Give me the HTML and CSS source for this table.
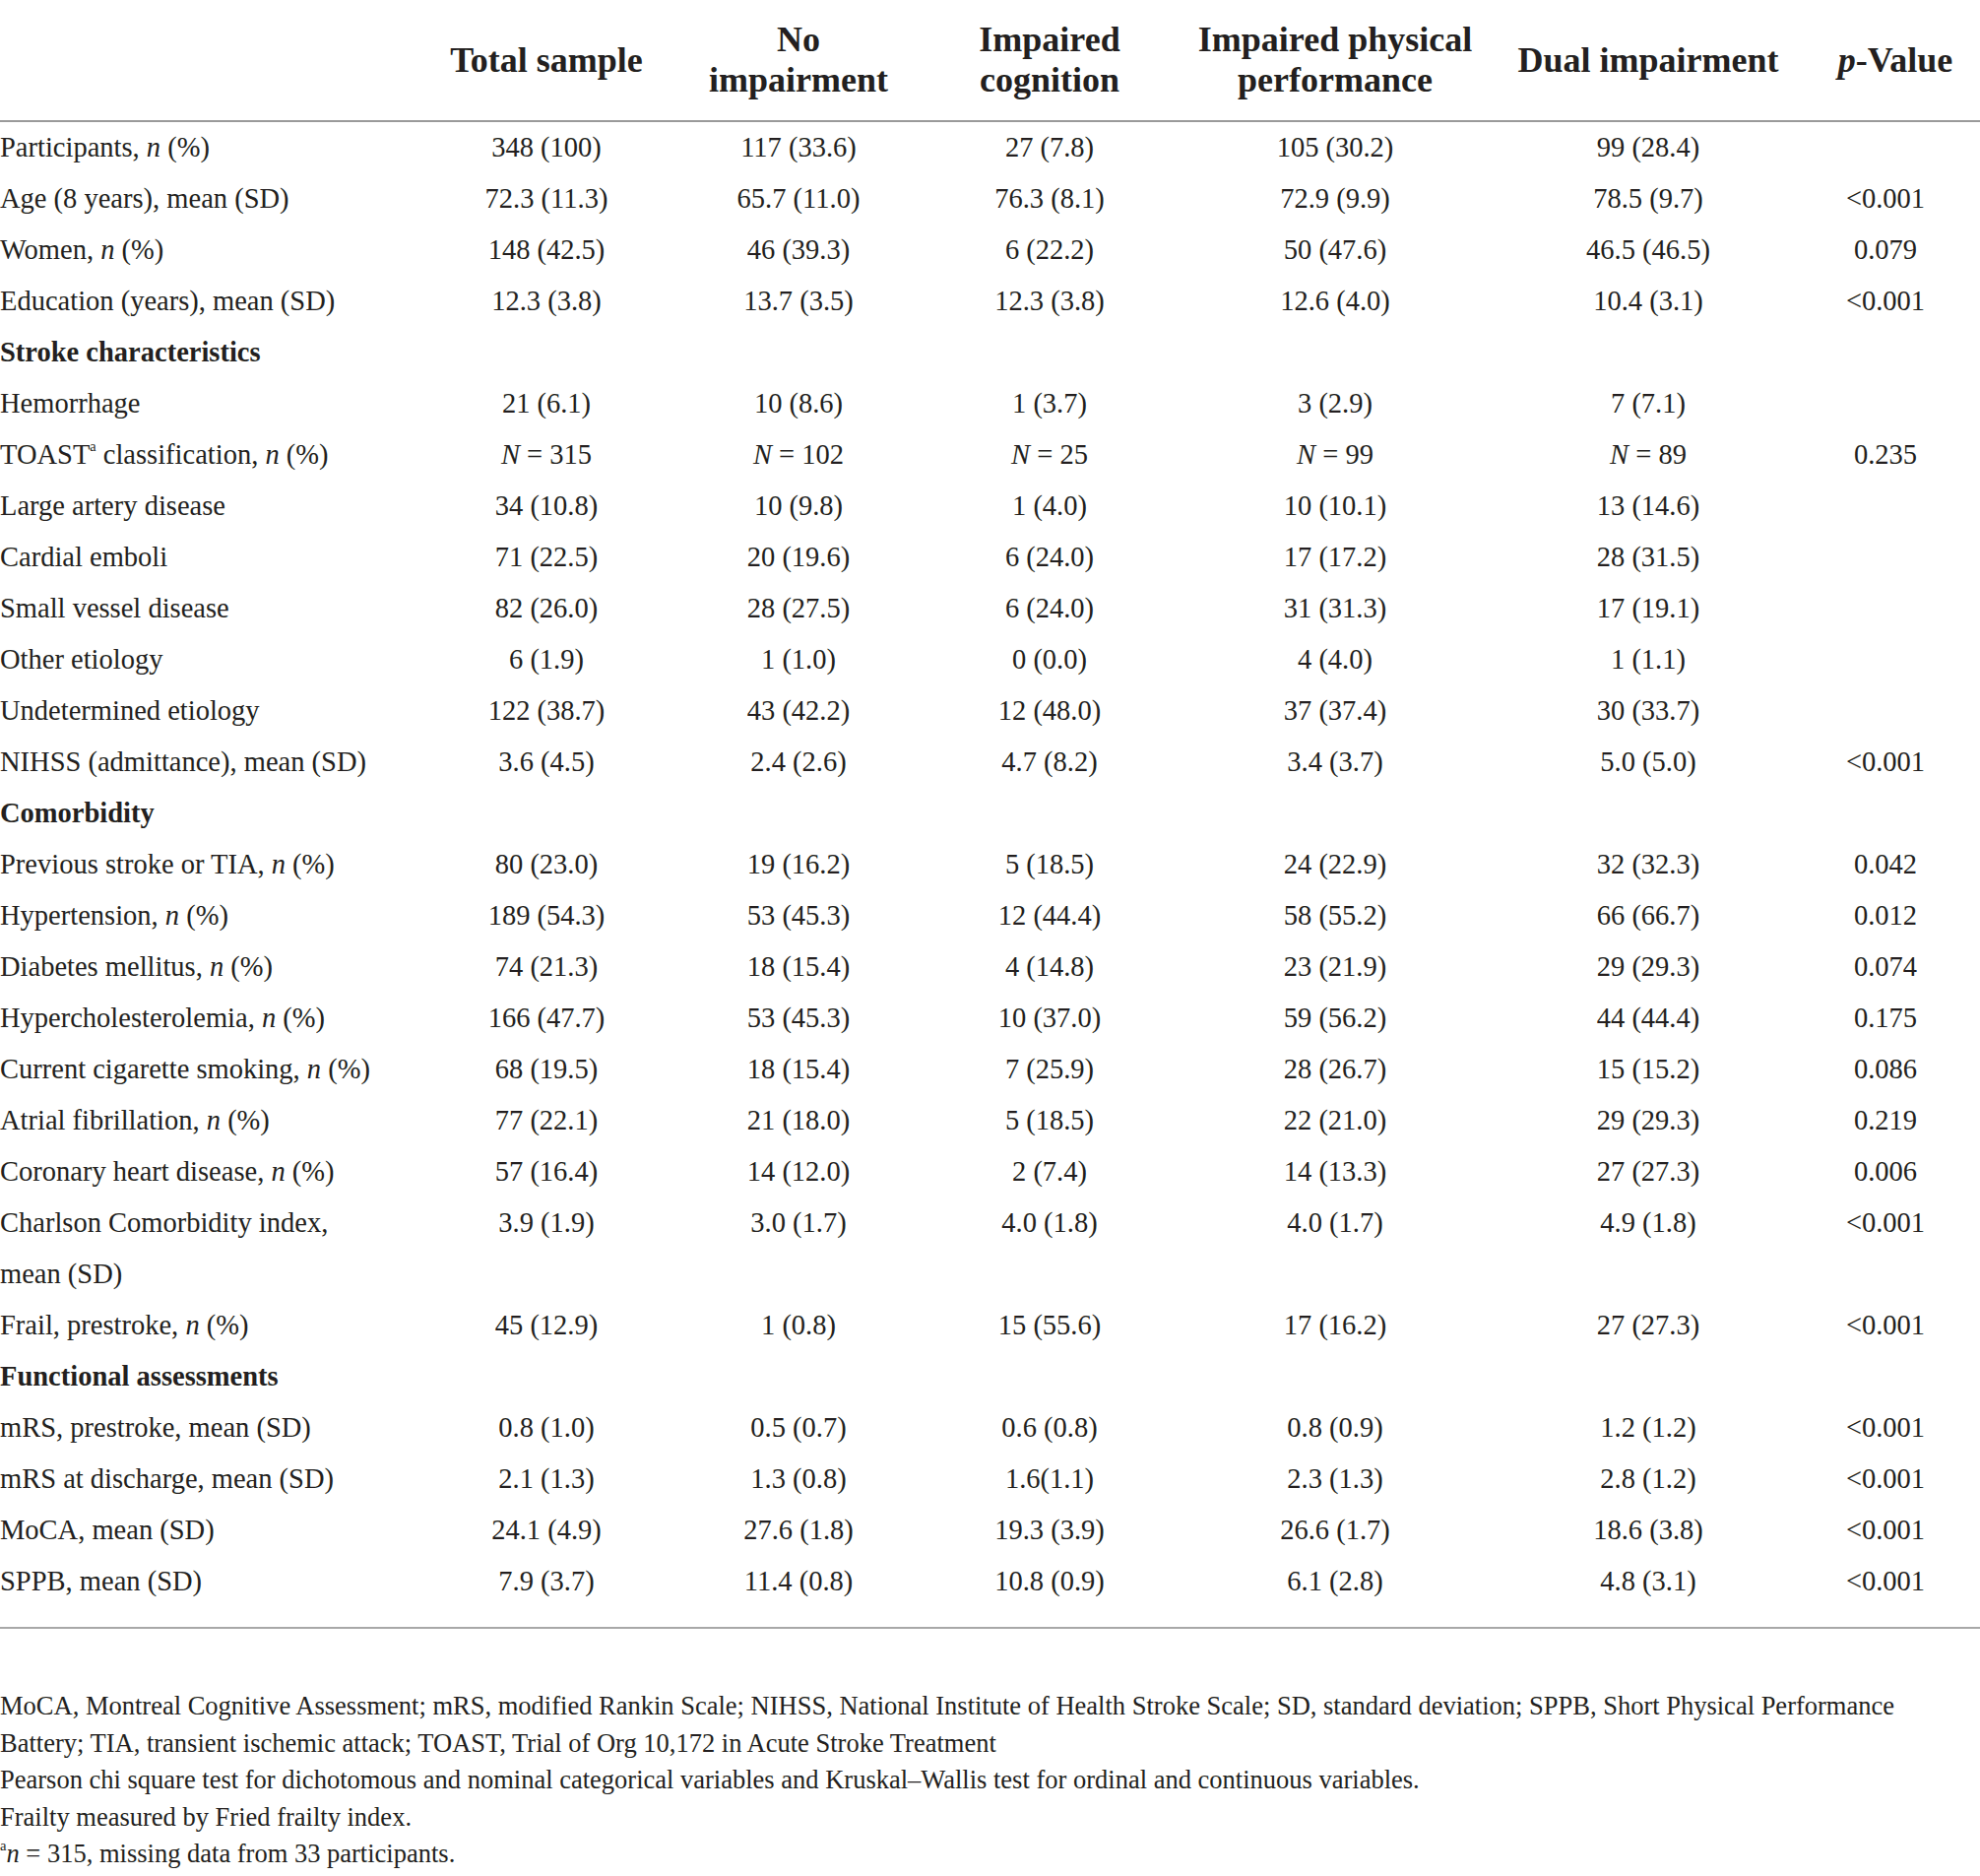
FILE: index.html
```html
<!DOCTYPE html>
<html>
<head>
<meta charset="utf-8">
<link rel="stylesheet" href="styles.css">
</head>
<body>
<table class="tbl">
<colgroup>
<col class="c-label"><col class="c-total"><col class="c-no"><col class="c-cog"><col class="c-phys"><col class="c-dual"><col class="c-p">
</colgroup>
<thead>
<tr>
<th></th>
<th>Total sample</th>
<th>No<br>impairment</th>
<th>Impaired<br>cognition</th>
<th>Impaired physical<br>performance</th>
<th>Dual impairment</th>
<th class="pv"><i>p</i>-Value</th>
</tr>
</thead>
<tbody>
<tr><td>Participants, <i>n</i> (%)</td><td>348 (100)</td><td>117 (33.6)</td><td>27 (7.8)</td><td>105 (30.2)</td><td>99 (28.4)</td><td></td></tr>
<tr><td>Age (8 years), mean (SD)</td><td>72.3 (11.3)</td><td>65.7 (11.0)</td><td>76.3 (8.1)</td><td>72.9 (9.9)</td><td>78.5 (9.7)</td><td>&lt;0.001</td></tr>
<tr><td>Women, <i>n</i> (%)</td><td>148 (42.5)</td><td>46 (39.3)</td><td>6 (22.2)</td><td>50 (47.6)</td><td>46.5 (46.5)</td><td>0.079</td></tr>
<tr><td>Education (years), mean (SD)</td><td>12.3 (3.8)</td><td>13.7 (3.5)</td><td>12.3 (3.8)</td><td>12.6 (4.0)</td><td>10.4 (3.1)</td><td>&lt;0.001</td></tr>
<tr class="sec"><td>Stroke characteristics</td><td></td><td></td><td></td><td></td><td></td><td></td></tr>
<tr><td>Hemorrhage</td><td>21 (6.1)</td><td>10 (8.6)</td><td>1 (3.7)</td><td>3 (2.9)</td><td>7 (7.1)</td><td></td></tr>
<tr><td>TOAST<sup>a</sup> classification, <i>n</i> (%)</td><td><i>N</i> = 315</td><td><i>N</i> = 102</td><td><i>N</i> = 25</td><td><i>N</i> = 99</td><td><i>N</i> = 89</td><td>0.235</td></tr>
<tr><td>Large artery disease</td><td>34 (10.8)</td><td>10 (9.8)</td><td>1 (4.0)</td><td>10 (10.1)</td><td>13 (14.6)</td><td></td></tr>
<tr><td>Cardial emboli</td><td>71 (22.5)</td><td>20 (19.6)</td><td>6 (24.0)</td><td>17 (17.2)</td><td>28 (31.5)</td><td></td></tr>
<tr><td>Small vessel disease</td><td>82 (26.0)</td><td>28 (27.5)</td><td>6 (24.0)</td><td>31 (31.3)</td><td>17 (19.1)</td><td></td></tr>
<tr><td>Other etiology</td><td>6 (1.9)</td><td>1 (1.0)</td><td>0 (0.0)</td><td>4 (4.0)</td><td>1 (1.1)</td><td></td></tr>
<tr><td>Undetermined etiology</td><td>122 (38.7)</td><td>43 (42.2)</td><td>12 (48.0)</td><td>37 (37.4)</td><td>30 (33.7)</td><td></td></tr>
<tr><td>NIHSS (admittance), mean (SD)</td><td>3.6 (4.5)</td><td>2.4 (2.6)</td><td>4.7 (8.2)</td><td>3.4 (3.7)</td><td>5.0 (5.0)</td><td>&lt;0.001</td></tr>
<tr class="sec"><td>Comorbidity</td><td></td><td></td><td></td><td></td><td></td><td></td></tr>
<tr><td>Previous stroke or TIA, <i>n</i> (%)</td><td>80 (23.0)</td><td>19 (16.2)</td><td>5 (18.5)</td><td>24 (22.9)</td><td>32 (32.3)</td><td>0.042</td></tr>
<tr><td>Hypertension, <i>n</i> (%)</td><td>189 (54.3)</td><td>53 (45.3)</td><td>12 (44.4)</td><td>58 (55.2)</td><td>66 (66.7)</td><td>0.012</td></tr>
<tr><td>Diabetes mellitus, <i>n</i> (%)</td><td>74 (21.3)</td><td>18 (15.4)</td><td>4 (14.8)</td><td>23 (21.9)</td><td>29 (29.3)</td><td>0.074</td></tr>
<tr><td>Hypercholesterolemia, <i>n</i> (%)</td><td>166 (47.7)</td><td>53 (45.3)</td><td>10 (37.0)</td><td>59 (56.2)</td><td>44 (44.4)</td><td>0.175</td></tr>
<tr><td>Current cigarette smoking, <i>n</i> (%)</td><td>68 (19.5)</td><td>18 (15.4)</td><td>7 (25.9)</td><td>28 (26.7)</td><td>15 (15.2)</td><td>0.086</td></tr>
<tr><td>Atrial fibrillation, <i>n</i> (%)</td><td>77 (22.1)</td><td>21 (18.0)</td><td>5 (18.5)</td><td>22 (21.0)</td><td>29 (29.3)</td><td>0.219</td></tr>
<tr><td>Coronary heart disease, <i>n</i> (%)</td><td>57 (16.4)</td><td>14 (12.0)</td><td>2 (7.4)</td><td>14 (13.3)</td><td>27 (27.3)</td><td>0.006</td></tr>
<tr><td>Charlson Comorbidity index,<br>mean (SD)</td><td>3.9 (1.9)</td><td>3.0 (1.7)</td><td>4.0 (1.8)</td><td>4.0 (1.7)</td><td>4.9 (1.8)</td><td>&lt;0.001</td></tr>
<tr><td>Frail, prestroke, <i>n</i> (%)</td><td>45 (12.9)</td><td>1 (0.8)</td><td>15 (55.6)</td><td>17 (16.2)</td><td>27 (27.3)</td><td>&lt;0.001</td></tr>
<tr class="sec"><td>Functional assessments</td><td></td><td></td><td></td><td></td><td></td><td></td></tr>
<tr><td>mRS, prestroke, mean (SD)</td><td>0.8 (1.0)</td><td>0.5 (0.7)</td><td>0.6 (0.8)</td><td>0.8 (0.9)</td><td>1.2 (1.2)</td><td>&lt;0.001</td></tr>
<tr><td>mRS at discharge, mean (SD)</td><td>2.1 (1.3)</td><td>1.3 (0.8)</td><td>1.6(1.1)</td><td>2.3 (1.3)</td><td>2.8 (1.2)</td><td>&lt;0.001</td></tr>
<tr><td>MoCA, mean (SD)</td><td>24.1 (4.9)</td><td>27.6 (1.8)</td><td>19.3 (3.9)</td><td>26.6 (1.7)</td><td>18.6 (3.8)</td><td>&lt;0.001</td></tr>
<tr class="last"><td>SPPB, mean (SD)</td><td>7.9 (3.7)</td><td>11.4 (0.8)</td><td>10.8 (0.9)</td><td>6.1 (2.8)</td><td>4.8 (3.1)</td><td>&lt;0.001</td></tr>
</tbody>
</table>
<div class="notes">
<p>MoCA, Montreal Cognitive Assessment; mRS, modified Rankin Scale; NIHSS, National Institute of Health Stroke Scale; SD, standard deviation; SPPB, Short Physical Performance Battery; TIA, transient ischemic attack; TOAST, Trial of Org 10,172 in Acute Stroke Treatment</p>
<p>Pearson chi square test for dichotomous and nominal categorical variables and Kruskal–Wallis test for ordinal and continuous variables.</p>
<p>Frailty measured by Fried frailty index.</p>
<p><sup>a</sup><i>n</i> = 315, missing data from 33 participants.</p>
</div>
</body>
</html>
```
FILE: styles.css
```css
html, body {
  margin: 0;
  padding: 0;
  background: #ffffff;
}
body {
  font-family: "Liberation Serif", "Times New Roman", serif;
  color: #231f20;
  width: 2011px;
}
.tbl {
  width: 2011px;
  border-collapse: collapse;
  table-layout: fixed;
  font-size: 28.5px;
}
.c-label { width: 437px; }
.c-total { width: 236px; }
.c-no { width: 276px; }
.c-cog { width: 234px; }
.c-phys { width: 346px; }
.c-dual { width: 290px; }
.c-p { width: 192px; }
.tbl th {
  font-size: 36px;
  font-weight: bold;
  line-height: 41px;
  padding: 20px 0 20px;
  text-align: center;
  vertical-align: middle;
  border-bottom: 2px solid #9a9a9a;
}
.tbl th.pv {
  padding-left: 20px;
}
.tbl td {
  padding: 0;
  line-height: 52px;
  text-align: center;
  vertical-align: top;
  white-space: nowrap;
}
.tbl td:first-child {
  text-align: left;
  white-space: normal;
}
.tbl tr.sec td:first-child {
  font-weight: bold;
}
.tbl tr.last td {
  padding-bottom: 20px;
  border-bottom: 2px solid #a8a8a8;
}
.tbl sup {
  font-size: 0.5em;
  line-height: 0;
  vertical-align: 0.9em;
}
.notes {
  padding-top: 60px;
  font-size: 26.5px;
  line-height: 37.5px;
  width: 1990px;
}
.notes p {
  margin: 0;
}
.notes sup {
  font-size: 0.55em;
  line-height: 0;
  vertical-align: 0.8em;
}
```
